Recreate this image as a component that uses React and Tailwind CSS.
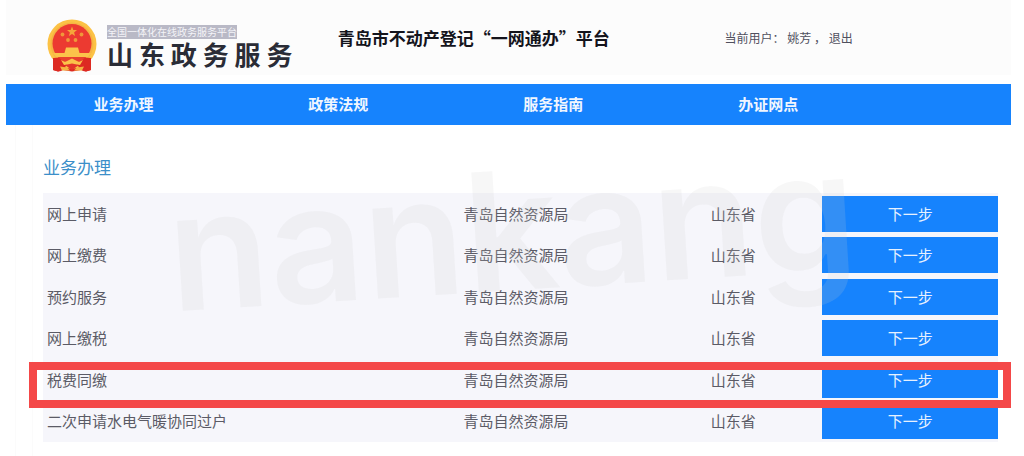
const navItems = ["业务办理", "政策法规", "服务指南", "办证网点"];

const services = [
    { name: "网上申请" },
    { name: "网上缴费" },
    { name: "预约服务" },
    { name: "网上缴税" },
    { name: "税费同缴", highlighted: true },
    { name: "二次申请水电气暖协同过户" },
];

function Emblem() {

    return (

        <svg viewBox="0 0 50 53" className="w-[50px] h-[53px] shrink-0" aria-hidden="true">
            <path d="M6 34 H44 V51 L39 52.500 L34 51 L25 52.500 L16 51 L11 52.500 L6 51 Z" fill="#dd2a22" />
            <circle cx="25" cy="25" r="24.500" fill="#fcc245" />
            <circle cx="25" cy="25" r="21.500" fill="#f5b443" />
            <circle cx="25" cy="24.500" r="19.500" fill="#ec3a31" />
            <path d="M25 7.500 L26.300 11 L30 11.100 L27.100 13.400 L28.100 17 L25 14.900 L21.900 17 L22.900 13.400 L20 11.100 L23.700 11 Z" fill="#f5a63a" />
            <g fill="#ef983a">
                <circle cx="15.500" cy="15.500" r="1.900" />
                <circle cx="34.500" cy="15.500" r="1.900" />
                <circle cx="21" cy="21" r="1.900" />
                <circle cx="28.500" cy="21" r="1.900" />
            </g>
            <path d="M19 28.500 H31 L32.500 34 H44 L41 38 H9 L6 34 H17.500 Z" fill="#fbc34a" />
            <path d="M6 39 L14 38.500 L20 46 L14 52 L11 52.500 L6 51 Z M44 39 L36 38.500 L30 46 L36 52 L39 52.500 L44 51 Z" fill="#dd2a22" />
            <path d="M11 38 H39 L33 43 L25 40 L17 43 Z" fill="#e8402e" />
            <path d="M14 41 L18 43 L25 39.500 L32 43 L36 41 L33 46 L25 45 L17 46 Z" fill="#fbc34a" />
            <path d="M18 46 L25 44.500 L32 46 L25 51 Z" fill="#e3352a" />
            <path d="M13 47.500 L20 48.500 L23 51.500 L15 51.500 Z M37 47.500 L30 48.500 L27 51.500 L35 51.500 Z" fill="#f5b443" />
        </svg>
    );
}

function Header() {

    return (

        <header className="grid grid-cols-[33%_38.5%_1fr] items-start h-[75px] bg-[#fcfcfc]">

            <div className="flex gap-[10px] pl-[41px] pt-[19px]">

                <Emblem />

                <div className="pt-[6px] whitespace-nowrap">
                    <p className="w-fit bg-[#b9b9c6] text-[10px] leading-[14px] text-[#f4f4f8]">
                        全国一体化在线政务服务平台
                    </p>
                    <p className="text-[26px] leading-[30px] font-bold text-[#2a2c36]">
                        山 东 政 务 服 务
                    </p>
                </div>

            </div>

            <h1 className="pt-[26px] text-[17px] leading-[24px] font-bold text-[#14141c] whitespace-nowrap">
                青岛市不动产登记“一网通办”平台
            </h1>

            <p className="pt-[26px] text-[12px] leading-[24px] text-[#50505e] whitespace-nowrap">
                当前用户： 姚芳 ， <a href="#logout">退出</a>
            </p>

        </header>
    );
}

function ServiceRow({ name, highlighted }) {

    return (

        <tr className="relative">
            <td className="pl-[4px]">{name}</td>
            <td className="pl-[4px]">青岛自然资源局</td>
            <td className="pl-[4px]">山东省</td>
            <td>
                <button type="button" className="block w-full h-[36px] bg-[#1683fd] text-[#e6f1ff]">
                    下一步
                </button>
                {highlighted && (
                    <span className="absolute z-10 -left-[14px] -right-[13px] top-[3px] h-[46px] border-8 border-[#f44848] pointer-events-none" />
                )}
            </td>
        </tr>
    );
}

export default function App() {

    return (

        <div
            lang="zh-CN"
            className="relative overflow-hidden bg-white pl-[6px] pr-[13px] font-['Noto_Sans_CJK_SC',sans-serif] text-[15px]"
        >

            <Header />

            <nav className="mt-[9px] flex items-center h-[41px] pl-[10px] bg-[#1683fd]">
                {navItems.map((item) => (
                    <a key={item} href="#nav" className="w-[21.6%] text-center font-bold text-[#f0f6ff]">
                        {item}
                    </a>
                ))}
            </nav>

            <div className="flex">

                <div className="ml-[9px] mr-[10px] w-[18px] border-x border-[#fbfbfb]" />

                <main className="flex-1 pt-[30px] pb-[14px] pr-[13px]">

                    <h2 className="text-[17px] leading-[24px] mb-[14px] text-[#3c8fc9]">
                        业务办理
                    </h2>

                    <table className="w-full h-[249px] table-fixed border-collapse bg-[#f6f6fb] text-left text-[#5b5b66]">
                        <colgroup>
                            <col className="w-[43.6%]" />
                            <col className="w-[25.9%]" />
                            <col className="w-[12.1%]" />
                            <col />
                        </colgroup>
                        <tbody>
                            {services.map((service) => (
                                <ServiceRow key={service.name} {...service} />
                            ))}
                        </tbody>
                    </table>

                </main>

            </div>

            {/* watermark */}
            <div
                aria-hidden="true"
                className="absolute inset-x-0 top-[130px] -rotate-[3.6deg] text-center font-['Inter',sans-serif] font-semibold text-[165px] leading-[200px] text-[#cecece]/16 pointer-events-none select-none"
            >
                nankang
            </div>

        </div>
    );
}
